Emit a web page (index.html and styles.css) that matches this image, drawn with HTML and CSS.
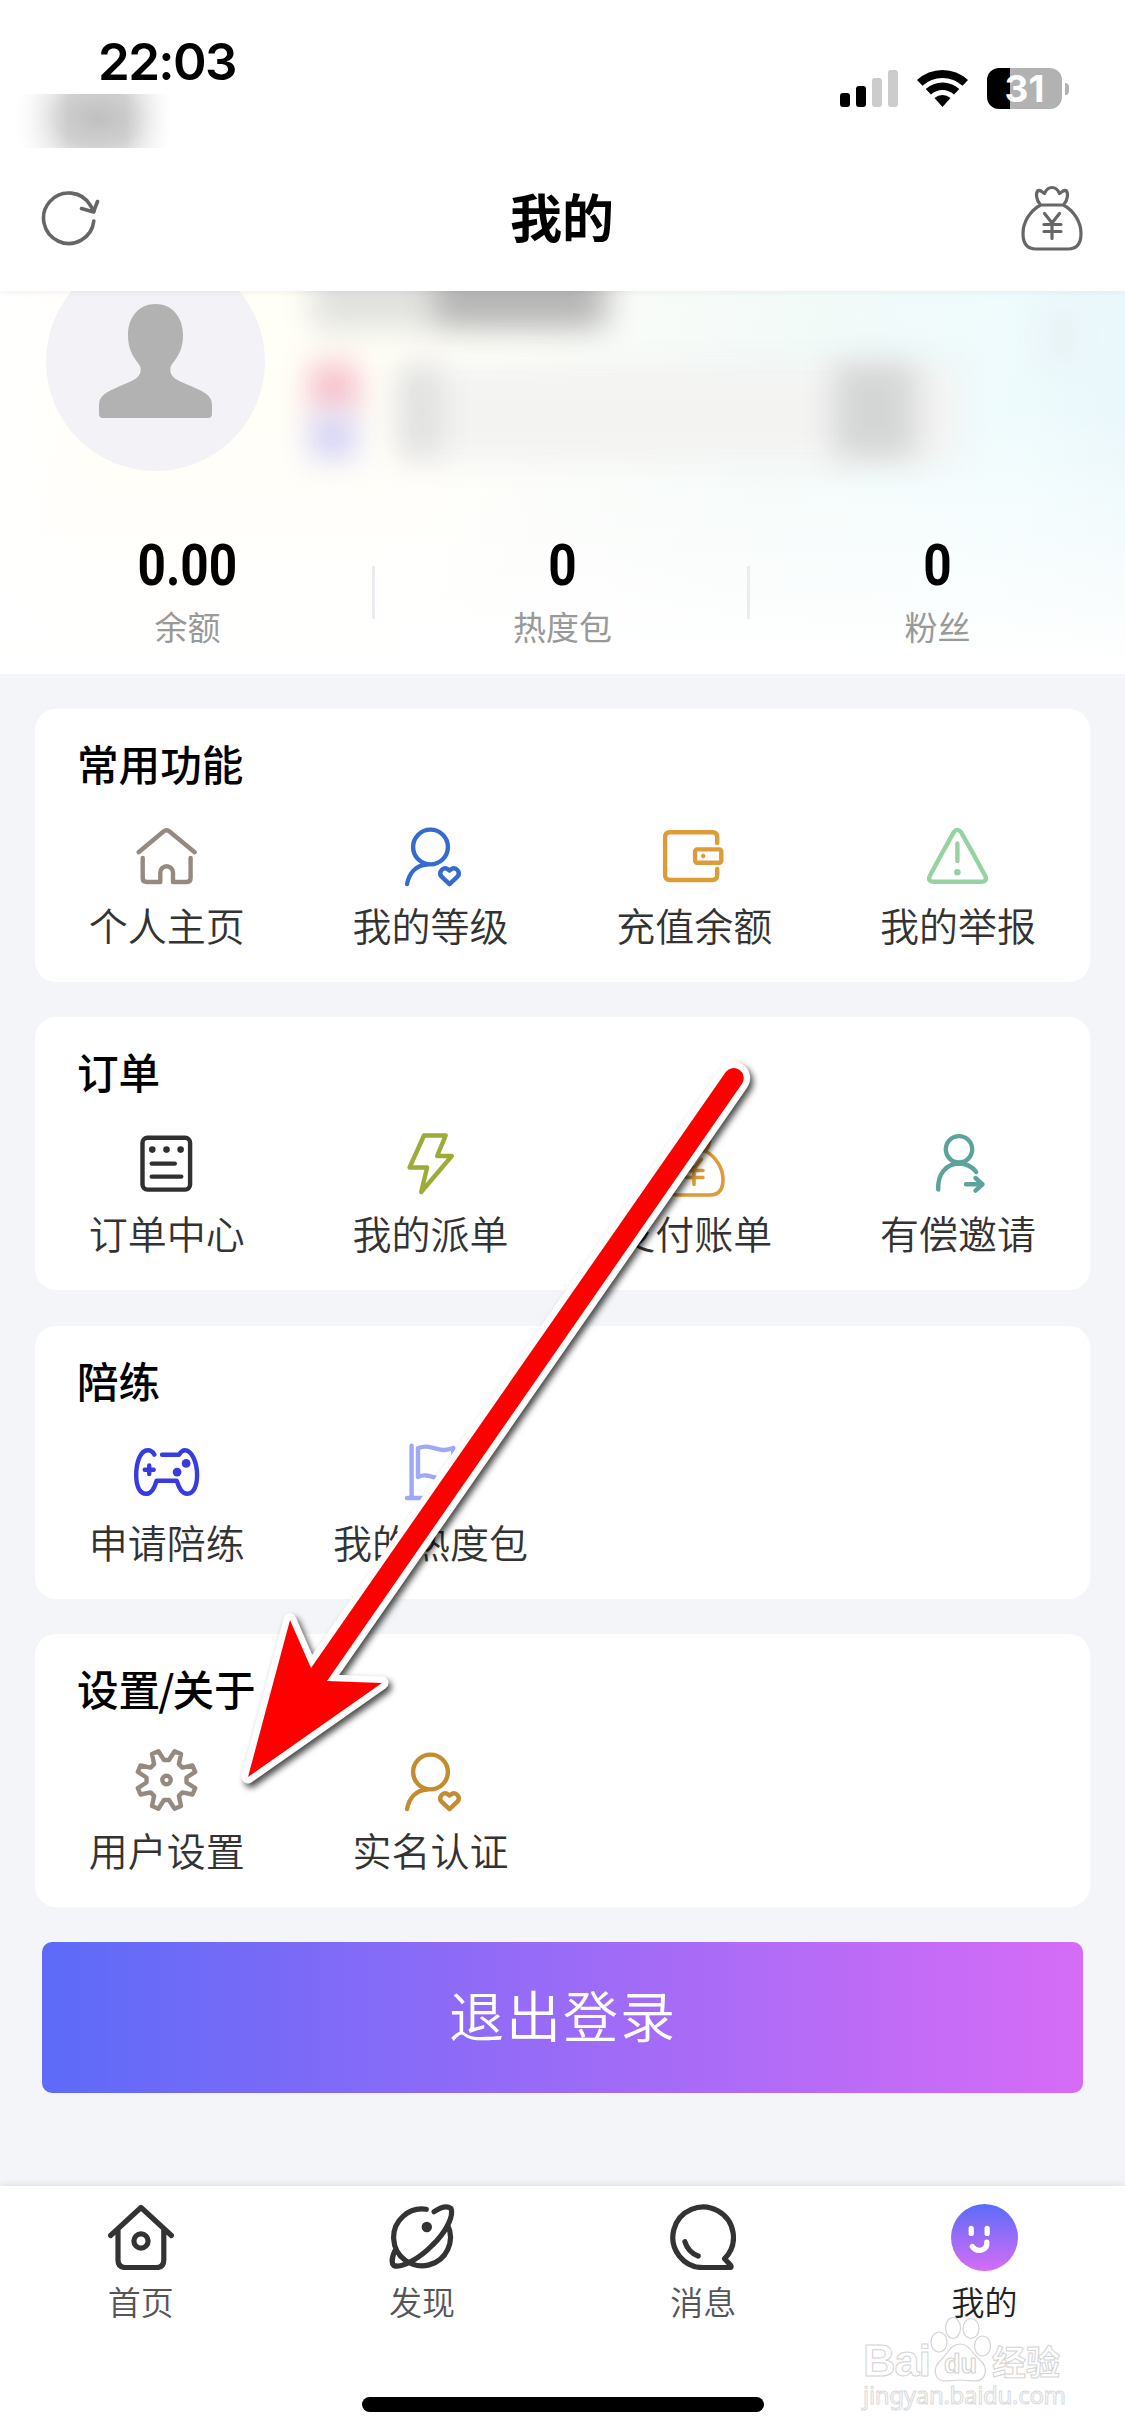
FILE: index.html
```html
<!DOCTYPE html>
<html lang="zh-CN">
<head>
<meta charset="utf-8">
<title>我的</title>
<link rel="stylesheet" href="styles.css">
</head>
<body>
<svg class="defs" width="0" height="0">
  <symbol id="bag" viewBox="0 0 66 66">
    <path d="M21.500 20C11 26 4 37 4 48.500C4 59 8 64 17 64H49C58 64 62 59 62 48.500C62 37 55 26 44.500 20ZM21.500 20C17 15 16.500 8 19 5.500C22 4.500 24 8 25.500 8.500C27 5 30 2.500 33 2.500S39 5 40.500 8.500C42 8 44 4.500 47 5.500C49.500 8 49 15 44.500 20M25.500 28.500L33 38L40.500 28.500M25 39.500H42M25 46.500H42M33 38V53.500"/>
  </symbol>
  <symbol id="user-heart" viewBox="0 0 66 66">
    <circle cx="32.500" cy="24" r="17.400"/>
    <path d="M9.100 61C11 50 18 42.500 29 41.500M51.500 61.200L43.300 53.400A4.900 4.900 0 0 1 49.700 46.200L51.500 47.600L53.300 46.200A4.900 4.900 0 0 1 59.700 53.400Z"/>
  </symbol>
</svg>
<div class="screen">
  <header class="top">
    <div class="status">
      <span class="time">22:03</span>
      <div class="indicators">
        <svg class="signal" viewBox="0 0 58 37"><path d="M0 26q0-3 3-3h4q3 0 3 3v8q0 3-3 3H3q-3 0-3-3zM16 19q0-3 3-3h4q3 0 3 3v15q0 3-3 3h-4q-3 0-3-3z"/><path class="faint" d="M32 11q0-3 3-3h4q3 0 3 3v23q0 3-3 3h-4q-3 0-3-3zM48 3q0-3 3-3h4q3 0 3 3v31q0 3-3 3h-4q-3 0-3-3z"/></svg>
        <svg class="wifi" viewBox="0 0 51 37"><path d="M0 10Q11 0 25.500 0T51 10L45.500 15.800Q37 8 25.500 8T5.500 15.800ZM8.700 19Q16 12.500 25.500 12.500T42.300 19L37 24.500Q32 20 25.500 20T14 24.500ZM17.500 28Q21 25 25.500 25T33.500 28L25.500 37Z"/></svg>
        <div class="battery"><span class="level">31</span></div>
      </div>
      <i class="carrier"></i>
    </div>
    <div class="navbar">
      <svg class="refresh" viewBox="0 0 60 60"><path d="M53.800 33A25.200 25.200 0 1 1 50.500 17.500L54 23.500M41.500 20.500L53.500 24L57.500 13.500"/></svg>
      <h1 class="title">我的</h1>
      <svg class="nav-bag"><use href="#bag"/></svg>
    </div>
  </header>

  <section class="profile">
    <div class="masked">
      <i class="m name-a"></i><i class="m name-b"></i><i class="m band"></i><i class="m pink"></i><i class="m blue"></i><i class="m key"></i><i class="m val"></i><i class="m scan"></i>
    </div>
    <div class="avatar"><svg viewBox="0 0 113 114"><path d="M56.500 0C73 0 84 13 84 31C84 49 76 55 71.500 63C70 74 78 76 92 82C105 88 113 91 113 101V110Q113 114 109 114H4Q0 114 0 110V101C0 91 8 88 21 82C35 76 43 74 41.500 63C37 55 29 49 29 31C29 13 40 0 56.500 0Z"/></svg></div>
    <div class="stats">
      <div class="stat"><b>0.00</b><span>余额</span></div>
      <div class="stat"><b>0</b><span>热度包</span></div>
      <div class="stat"><b>0</b><span>粉丝</span></div>
    </div>
  </section>

  <main class="cards">
    <section class="card">
      <h2>常用功能</h2>
      <div class="grid">
        <div class="item taupe"><svg viewBox="0 0 66 66"><path d="M4.600 29.200L29.500 8.500Q32.500 6 35.500 8.500L60.700 29.200M8.700 35V55Q8.700 59 12.700 59H26.300V49.600A6.350 6.350 0 0 1 39 49.600V59H52.600Q56.600 59 56.600 55V35"/></svg><span>个人主页</span></div>
        <div class="item blue-ink"><svg><use href="#user-heart"/></svg><span>我的等级</span></div>
        <div class="item amber"><svg viewBox="0 0 66 66"><path d="M56.200 20V14Q56.200 9.200 51.500 9.200H9Q4.100 9.200 4.100 14V52Q4.100 57 9 57H51.500Q56.200 57 56.200 52V46"/><rect x="34.100" y="26.400" width="26.200" height="13.400" rx="2"/><circle class="dot" cx="42.200" cy="33" r="2.200"/></svg><span>充值余额</span></div>
        <div class="item green"><svg viewBox="0 0 66 66"><path d="M28.800 9.200Q32.400 4.500 36 9.200Q49 32 60.300 53Q62.500 58.600 56.500 58.800H8.500Q2.500 58.600 4.700 53Q16 32 28.800 9.200ZM32.400 20.500V38"/><circle class="dot" cx="32.400" cy="49.300" r="3.300"/></svg><span>我的举报</span></div>
      </div>
    </section>
    <section class="card">
      <h2>订单</h2>
      <div class="grid">
        <div class="item ink"><svg viewBox="0 0 66 66"><rect x="8.500" y="6.800" width="47.600" height="51.800" rx="5"/><path d="M17.700 32.600H40.800M17.700 45.600H47.300"/><circle class="dot" cx="18.300" cy="18.600" r="3.300"/><circle class="dot" cx="32.500" cy="18.600" r="3.300"/><circle class="dot" cx="46.600" cy="18.600" r="3.300"/></svg><span>订单中心</span></div>
        <div class="item olive"><svg viewBox="0 0 66 66"><path d="M26 4.500H47.700L39.100 25H53.800L23.200 61L29.100 36.500H11.600Z"/></svg><span>我的派单</span></div>
        <div class="item amber thin"><svg><use href="#bag"/></svg><span>支付账单</span></div>
        <div class="item teal"><svg viewBox="0 0 66 66"><circle cx="34" cy="18.300" r="13.200"/><path d="M13.200 58.500C12.500 43 21 32.800 34 32.500C41 32.500 47 35.500 51.200 41M41 53.300H57.500M50.500 47L57.500 53.300L50.500 59.600"/></svg><span>有偿邀请</span></div>
      </div>
    </section>
    <section class="card">
      <h2>陪练</h2>
      <div class="grid">
        <div class="item indigo"><svg viewBox="0 0 66 66"><path d="M20.400 14.600Q18 10.200 13.900 10.200C6 10.200 2.200 23 2.200 35C2.200 47 6 53.800 12.100 53.800C18 53.800 20.500 48 22.500 40.800H42.800C45 48 47.500 53.800 53.500 53.800C59.500 53.800 63.100 46 63.100 35C63.100 22 57.500 10.200 51 10.200Q47.500 10.200 44.900 14.800H28M15.200 25.500V34.100M10.700 29.800H19.700"/><circle class="dot" cx="52.100" cy="23.400" r="4.400"/><circle class="dot" cx="43.100" cy="32.100" r="4.400"/></svg><span>申请陪练</span></div>
        <div class="item lilac"><svg viewBox="0 0 66 66"><path d="M13.600 5.800V58M9 58H56M20 8.200C33 2.500 40 14.500 55.300 8V38C41 44 32 31 20 37Z"/></svg><span>我的热度包</span></div>
      </div>
    </section>
    <section class="card">
      <h2>设置<span class="slash">/</span>关于</h2>
      <div class="grid">
        <div class="item taupe"><svg viewBox="-32.500 -32 66 66"><path d="M-2.500 -20L2.500 -20L8.100 -28.700L14.500 -26L12.400 -15.900L15.900 -12.400L26 -14.500L28.700 -8.100L20 -2.500L20 2.500L28.700 8.100L26 14.500L15.900 12.400L12.400 15.900L14.500 26L8.100 28.700L2.500 20L-2.500 20L-8.100 28.700L-14.500 26L-12.400 15.900L-15.900 12.400L-26 14.500L-28.700 8.100L-20 2.500L-20 -2.500L-28.700 -8.100L-26 -14.500L-15.900 -12.400L-12.400 -15.900L-14.500 -26L-8.100 -28.700Z"/><circle r="4.200"/></svg><span>用户设置</span></div>
        <div class="item bronze"><svg><use href="#user-heart"/></svg><span>实名认证</span></div>
      </div>
    </section>
    <button class="logout">退出登录</button>
  </main>

  <footer class="tabbar">
    <nav class="tabs">
      <div class="tab"><svg viewBox="0 0 66 66"><path d="M2.600 31.500L33 3.500L63.400 31.500M10 26V56Q10 63.600 18 63.600H48Q55.800 63.600 55.800 56V26"/><circle cx="33" cy="37" r="7.100"/></svg><span>首页</span></div>
      <div class="tab"><svg viewBox="0 0 66 66"><path d="M37.300 5.300A28.400 28.400 0 1 0 58.600 21M45.100 7.700C53 2.500 59 2.200 62 4.500C65 13 56 29 43.500 41C32 53 13 65 4.800 61.500C2 59 3.500 52 6 46.500"/><circle class="dot" cx="37.800" cy="23" r="5.200"/></svg><span>发现</span></div>
      <div class="tab"><svg viewBox="0 0 66 66"><path d="M54.600 54.700A30.300 30.300 0 1 0 33.600 63.600H59.500Q61.800 63.600 60.800 61.500ZM14.900 37.700Q18 48 28.200 52"/></svg><span>消息</span></div>
      <div class="tab active"><svg viewBox="0 0 66 66"><defs><linearGradient id="face" x2="0" y2="1"><stop offset="0" stop-color="#5b6cf9"/><stop offset="1" stop-color="#d66cf6"/></linearGradient></defs><circle class="face" cx="33" cy="33" r="33" fill="url(#face)"/><path d="M19.900 24V29M35.600 24V29M21 42C26 48.500 36 46 35.300 37.500"/></svg><span>我的</span></div>
    </nav>
    <div class="home-bar"></div>
    <div class="watermark">
      <div class="brand"><span class="bai">Bai</span><svg class="paw" viewBox="0 0 62 66"><ellipse cx="9" cy="26" rx="8" ry="10"/><ellipse cx="23" cy="12" rx="7.500" ry="10.500"/><ellipse cx="41" cy="12.500" rx="8" ry="10"/><ellipse cx="52.500" cy="30" rx="8" ry="10"/><path d="M30 28C39 28 42 37 50 44C59 52 56 65 45 65C39 65 36 64 30 64S21 65 15 65C4 65 2 52 11 44C18 37 21 28 30 28Z"/><text x="14" y="57">du</text></svg><span class="exp">经验</span></div>
      <span class="url">jingyan.baidu.com</span>
    </div>
  </footer>

  <svg class="arrow" viewBox="230 1050 540 750">
    <path d="M725.400 1072.500A10 10 0 0 1 742 1083.700L327 1681L382 1683L248 1777L290 1620L311 1668Z"/>
    <path class="fill" d="M725.400 1072.500A10 10 0 0 1 742 1083.700L327 1681L382 1683L248 1777L290 1620L311 1668Z"/>
  </svg>
</div>
</body>
</html>
```
FILE: styles.css
```css
* { box-sizing: border-box; }
body { margin: 0; font-family: "Noto Sans CJK SC", sans-serif; }
h1, h2 { margin: 0; }
svg { display: block; fill: none; stroke: currentColor; stroke-linecap: round; stroke-linejoin: round; }
.defs { position: absolute; }
.screen { position: relative; width: 1125px; height: 2436px; display: flex; flex-direction: column; background: #f3f5f9; overflow: hidden; }

/* status bar and navigation */
.top { height: 291px; background: #fff; flex: none; box-shadow: 0 0 8px rgba(0,0,0,.08); z-index: 1; }
.status { position: relative; height: 150px; padding: 36px 56px 0 98px; display: flex; justify-content: space-between; align-items: flex-start; }
.time { font: 600 51px/52px Inter, sans-serif; letter-spacing: -1.6px; }
.indicators { display: flex; align-items: center; margin-top: 32px; }
.indicators svg { fill: #000; stroke: none; }
.signal { width: 58px; height: 37px; }
.signal .faint { fill: #ccc; }
.wifi { width: 51px; height: 37px; margin: 0 19px; }
.battery { position: relative; width: 75px; height: 41px; margin-right: 7px; border-radius: 12px; background: linear-gradient(90deg, #000 23px, #b2b2b2 23px); display: flex; justify-content: center; }
.battery::after { content: ""; position: absolute; left: 78px; top: 15px; width: 4px; height: 12px; border-radius: 0 4px 4px 0; background: #b2b2b2; }
.level { color: #fff; font: 700 37px/41px Inter, sans-serif; }
.carrier { position: absolute; left: 0; top: 94px; width: 180px; height: 54px; background: linear-gradient(90deg, #fff 8%, transparent 38%, transparent 70%, #fff 95%), radial-gradient(ellipse 95px 60px at 98px 24px, #c0c0c0, #d0d0d0 45%, #fff); }
.navbar { height: 141px; padding: 0 40px 5px; display: flex; align-items: center; justify-content: space-between; color: #666; }
.refresh { width: 60px; height: 60px; stroke-width: 3.6; }
.title { color: #000; font-size: 52px; font-weight: 600; line-height: 76px; margin: -5px 0 0 5px; }
.nav-bag { width: 66px; height: 66px; stroke-width: 3.2; }

/* profile */
.profile { position: relative; flex: none; height: 383px; padding-left: 46px; overflow: hidden; background: linear-gradient(180deg, transparent 30%, #fff 98%), linear-gradient(100deg, #fff 0, #fffef7 12%, #fffef8 38%, #f3faf8 66%, #eefbfd 88%, #e8f6fa 100%); }
.avatar { position: relative; width: 219px; height: 219px; margin-top: -39px; border-radius: 50%; background: #f3f3f7; display: flex; justify-content: center; padding-top: 52px; }
.avatar svg { width: 113px; height: 114px; fill: #b2b2b2; stroke: none; }
.masked { position: absolute; inset: 0; }
.m { position: absolute; filter: blur(15px); }
.name-a { left: 312px; top: -40px; width: 300px; height: 78px; background: #e1e2de; }
.name-b { left: 435px; top: -40px; width: 165px; height: 72px; background: #b4b4b4; }
.band { left: 400px; top: 75px; width: 560px; height: 95px; background: #f3f3f2; }
.pink { left: 310px; top: 72px; width: 48px; height: 48px; background: #f7bfcb; }
.blue { left: 310px; top: 123px; width: 46px; height: 44px; background: #d3d1f5; }
.key { left: 402px; top: 76px; width: 38px; height: 88px; background: #dfdfde; }
.val { left: 834px; top: 72px; width: 82px; height: 95px; background: #d4d6d6; }
.scan { left: 1045px; top: 15px; width: 35px; height: 60px; background: #e7f1f5; }
.stats { position: relative; margin: 67px 0 0 -46px; display: grid; grid-template-columns: repeat(3, 1fr); }
.stat { display: flex; flex-direction: column; align-items: center; position: relative; }
.stat + .stat::before { content: ""; position: absolute; left: -3px; top: 28px; width: 3px; height: 53px; background: #ececf0; }
.stat b { font: 700 57px/56px Roboto, sans-serif; transform: scaleX(.87); }
.stat span { margin-top: 8px; font-size: 33px; line-height: 48px; color: #999; font-weight: 400; }

/* cards */
.cards { padding: 35px 35px 0; display: flex; flex-direction: column; gap: 35.4px; }
.card { height: 273px; padding-top: 25px; border-radius: 21px; background: #fff; }
.card h2 { padding-left: 42px; font-size: 41.6px; line-height: 58px; font-weight: 500; color: #000; }
.slash { margin: 0 -2px; }
.grid { display: grid; grid-template-columns: repeat(4, 1fr); margin-top: 31px; }
.item { display: flex; flex-direction: column; align-items: center; }
.item svg { width: 66px; height: 66px; stroke-width: 4.4; }
.item.thin svg { stroke-width: 3.6; }
.item span { margin-top: 7px; font-size: 39px; line-height: 56px; color: #333; font-weight: 350; white-space: nowrap; }
.dot { fill: currentColor; stroke: none; }
.taupe { color: #958a80; }
.blue-ink { color: #356bce; }
.amber { color: #dc9c38; }
.green { color: #96d3a2; }
.ink { color: #303030; }
.olive { color: #9fab38; }
.teal { color: #5ba39b; }
.indigo { color: #383ce0; }
.lilac { color: #9fa8fb; }
.bronze { color: #c58b2f; }
.logout { width: 1041px; height: 151px; margin: -1px auto 0; padding: 0 0 8px 1px; border: 0; border-radius: 10px; background: linear-gradient(90deg, #5d6af8, #d66cf6); color: #fff; font: 350 55px/78px "Noto Sans CJK SC", sans-serif; letter-spacing: 2px; }

/* bottom bar */
.tabbar { position: relative; margin-top: auto; height: 250px; background: #fff; box-shadow: 0 0 9px rgba(0,0,0,.12); }
.tabs { display: grid; grid-template-columns: repeat(4, 1fr); padding-top: 18px; }
.tab { display: flex; flex-direction: column; align-items: center; color: #333; }
.tab svg { width: 66px; height: 66px; stroke-width: 5.2; }
.tab span { margin-top: 7px; font-size: 33px; line-height: 48px; font-weight: 350; color: #555; }
.tab.active svg { width: 67px; height: 67px; stroke: #fff; margin-bottom: -1px; }
.tab.active span { color: #222; }
.face { stroke: none; }
.home-bar { width: 402px; height: 15px; margin: 72px auto 0; border-radius: 8px; background: #000; }
.watermark { position: absolute; left: 863px; top: 130px; width: 205px; color: #fff; }
.brand { display: flex; align-items: flex-end; height: 66px; }
.bai { font: 700 45px/42px "Liberation Sans", sans-serif; -webkit-text-stroke: 1px #d4d4d4; width: 67px; letter-spacing: -1px; }
.paw { width: 62px; height: 66px; flex: none; fill: #fff; stroke: #d4d4d4; stroke-width: 1.2; }
.paw text { font: 700 27px "Liberation Sans", sans-serif; }
.exp { font-size: 34px; line-height: 42px; font-weight: 700; -webkit-text-stroke: 1px #d4d4d4; }
.url { display: block; font: 24px/30px "Noto Sans", sans-serif; -webkit-text-stroke: 1px #dadada; letter-spacing: -.3px; margin-top: -2px; }

/* pointer laid over the list */
.arrow { position: absolute; left: 230px; top: 1050px; width: 540px; height: 750px; z-index: 2; stroke: #fff; stroke-width: 13; fill: #fff; filter: drop-shadow(3px 4px 3px rgba(0,0,0,.7)); }
.arrow .fill { stroke: none; fill: #f00; }
```
